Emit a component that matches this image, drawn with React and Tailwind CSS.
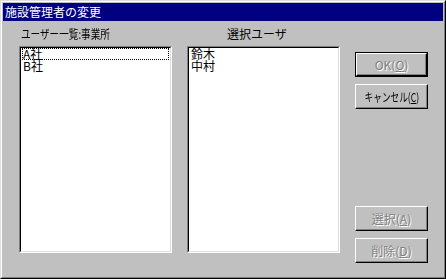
const font = { fontFamily: '"Noto Sans CJK JP", "Liberation Sans", sans-serif' };

const Raised = ({ isDefault, disabled, narrow, children }) => {
    const label = disabled
        ? "text-[#808080] [text-shadow:1px_1px_0_#ffffff]"
        : "text-black";
    const bevel = (
        <div className="flex-1 flex items-center justify-center overflow-hidden border border-t-white border-l-white border-r-black border-b-black shadow-[inset_-1px_-1px_0_#808080]">
            <span
                className={`inline-block whitespace-nowrap text-[12px] leading-[14px] ${label} ${
                    narrow ? "scale-x-[0.72]" : ""
                }`}
            >
                {children}
            </span>
        </div>
    );
    if (isDefault) {
        return <div className="flex h-[25px] w-[73px] border border-black">{bevel}</div>;
    }
    return <div className="flex h-[25px] w-[73px]">{bevel}</div>;
};

const ListBox = ({ items, focused }) => (
    <div className="flex-1 flex border border-t-[#808080] border-l-[#808080] border-r-white border-b-white">
        <div className="flex-1 bg-white border border-t-black border-l-black border-r-[#dfdfdf] border-b-[#dfdfdf] px-[1px]">
            {items.map((item, i) => (
                <div
                    key={item}
                    className={`h-[12px] leading-[10px] text-[12px] border ${
                        focused && i === 0 ? "border-dotted border-black" : "border-transparent"
                    }`}
                >
                    {item}
                </div>
            ))}
        </div>
    </div>
);

const App = () => {
    return (
        <div className="w-[446px] h-[279px] bg-[#c0c0c0] text-black" style={font}>
            <div className="w-full h-full border border-t-[#dfdfdf] border-l-[#dfdfdf] border-r-black border-b-black">
                <div className="w-full h-full flex flex-col border border-t-white border-l-white border-r-[#808080] border-b-[#808080] p-px">
                    {/* title bar */}
                    <div className="h-[18px] bg-[#000080] text-white text-[12px] leading-[18px] pl-[2px]">
                        施設管理者の変更
                    </div>

                    {/* body */}
                    <div className="flex-1 flex pl-[16px] pt-[6px]">
                        <div className="w-[153px] flex flex-col">
                            <div className="h-[19px] text-[12px] leading-[14px] pl-[2px]">
                                <span className="inline-block whitespace-nowrap origin-left scale-x-[0.8]">
                                    ユーザー一覧:事業所
                                </span>
                            </div>
                            <div className="flex h-[207px]">
                                <ListBox items={["A社", "B社"]} focused />
                            </div>
                        </div>

                        <div className="w-[153px] ml-[15px] flex flex-col">
                            <div className="h-[19px] text-[12px] leading-[14px] pl-[40px]">選択ユーザ</div>
                            <div className="flex h-[207px]">
                                <ListBox items={["鈴木", "中村"]} />
                            </div>
                        </div>

                        <div className="w-[73px] ml-[15px] flex flex-col pt-[25px] pb-[13px]">
                            <Raised isDefault disabled>
                                OK(<u>O</u>)
                            </Raised>
                            <div className="mt-[7px]">
                                <Raised narrow>
                                    キャンセル(<u>C</u>)
                                </Raised>
                            </div>
                            <div className="mt-auto">
                                <Raised disabled>
                                    選択(<u>A</u>)
                                </Raised>
                            </div>
                            <div className="mt-[7px]">
                                <Raised disabled>
                                    削除(<u>D</u>)
                                </Raised>
                            </div>
                        </div>
                    </div>
                </div>
            </div>
        </div>
    );
};

export default App;
